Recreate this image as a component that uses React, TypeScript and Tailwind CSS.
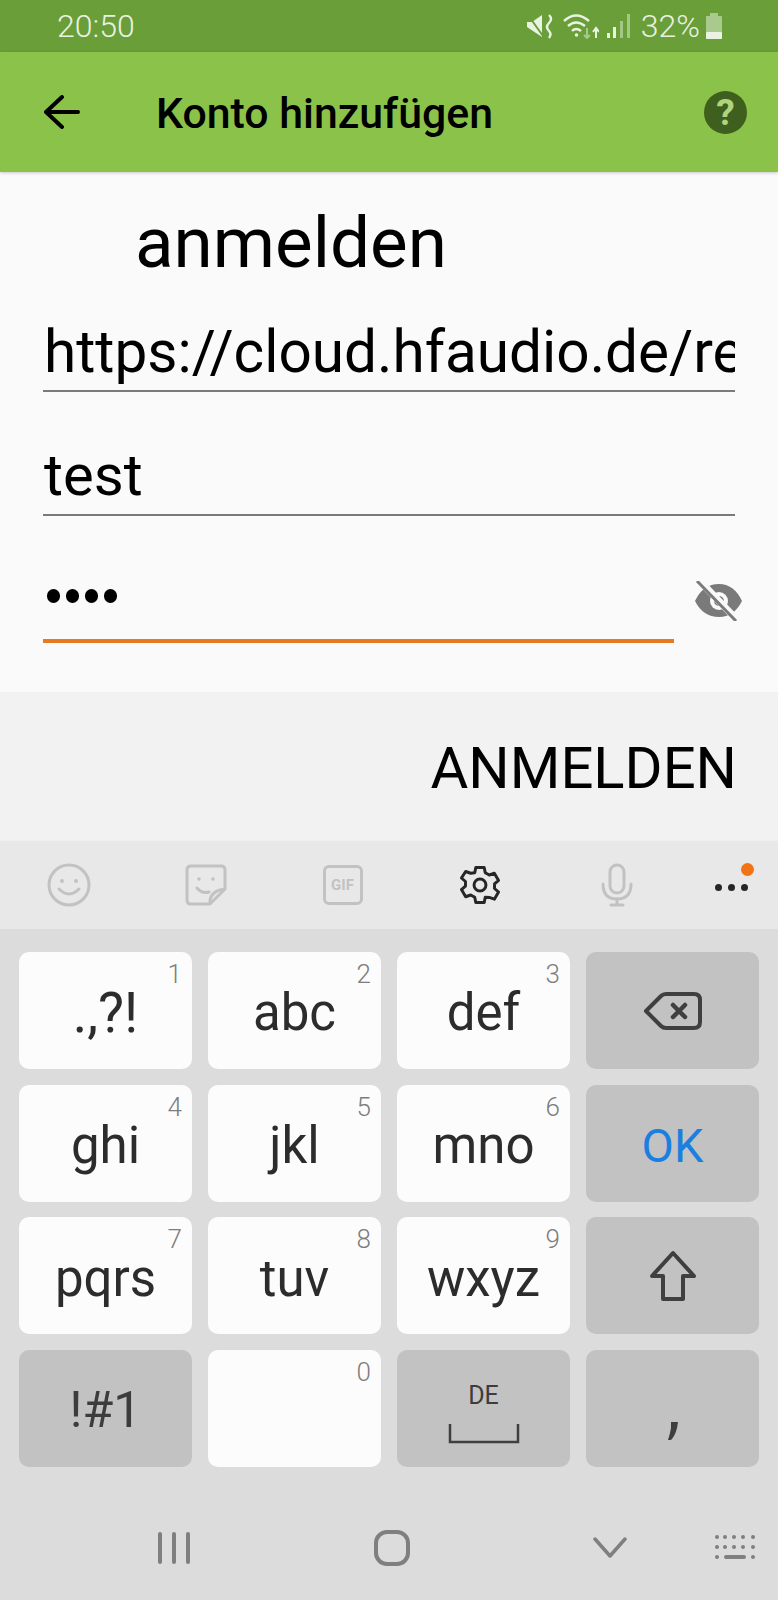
const keys = [
  { label: '.,?!', num: '1' },
  { label: 'abc', num: '2' },
  { label: 'def', num: '3' },
  { label: 'back', dark: true },
  { label: 'ghi', num: '4' },
  { label: 'jkl', num: '5' },
  { label: 'mno', num: '6' },
  { label: 'OK', dark: true },
  { label: 'pqrs', num: '7' },
  { label: 'tuv', num: '8' },
  { label: 'wxyz', num: '9' },
  { label: 'shift', dark: true },
  { label: '!#1', dark: true },
  { label: '', num: '0' },
  { label: 'space', dark: true },
  { label: 'comma', dark: true },
];

function KeyContent({ label }: { label: string }) {
  if (label === 'back') {
    return (
      <svg width="60" height="40" viewBox="0 0 60 40" fill="none" stroke="#3f3f3f" strokeWidth="4" strokeLinejoin="round" strokeLinecap="round">
        <path d="M3 20 L18 5 Q20 3 23 3 H51 Q57 3 57 9 V31 Q57 37 51 37 H23 Q20 37 18 35 Z" />
        <path d="M30 14 L42 26 M42 14 L30 26" strokeWidth="4.5" />
      </svg>
    );
  }
  if (label === 'OK') {
    return <span className="text-[47px] mt-[6px] text-[#1a7fe0]">OK</span>;
  }
  if (label === 'shift') {
    return (
      <svg width="48" height="52" viewBox="0 0 48 52" fill="none" stroke="#3f3f3f" strokeWidth="4" strokeLinejoin="round">
        <path d="M24 3 L45 26 H34 V49 H14 V26 H3 Z" />
      </svg>
    );
  }
  if (label === 'space') {
    return (
      <div className="flex flex-col items-center gap-[13px] mt-[9px]">
        <span className="text-[25px] leading-[26px] text-[#3c3c3c]">DE</span>
        <svg width="72" height="22" viewBox="0 0 72 22" fill="none" stroke="#3f3f3f" strokeWidth="2.5">
          <path d="M2 2 V20 H70 V2" />
        </svg>
      </div>
    );
  }
  if (label === 'comma') {
    return (
      <svg width="11" height="18" viewBox="0 0 11 18" className="mt-[44px]" fill="#3f3f3f">
        <path d="M4 0 H11 L10 6 Q8 14 4 18 H1 Q3 12 4 6 Z" />
      </svg>
    );
  }
  if (label === '!#1') {
    return <span className="text-[50px] mt-[4px] text-[#3c3c3c]">!#1</span>;
  }
  if (label === '.,?!') {
    return <span className="text-[55px] mt-[6px] text-[#2c2c2c]">.,?!</span>;
  }
  return <span className="text-[51px] mt-[6px] text-[#2c2c2c]">{label}</span>;
}

export default function App() {
  return (
    <div className="w-[778px] h-[1600px] flex flex-col bg-[#dcdcdc] font-['Roboto',sans-serif] overflow-hidden">
      {/* status bar */}
      <div className="h-[52px] shrink-0 bg-[#699e39] flex items-center pl-[57px] pr-[55px] text-[#e9f1e0]">
        <span className="text-[32px] font-light">20:50</span>
        <div className="ml-auto flex items-center">
          <svg width="27" height="26" viewBox="0 0 27 26" fill="#eaf2e2">
            <path d="M1 9 H6 L16 2 V24 L10 20 L1 14 Z" />
            <path d="M2 2 L17 23" stroke="#699e39" strokeWidth="2" />
            <path d="M23 2 Q27 6 23 10 Q19 14 23 18 Q26 21 23 25" stroke="#eaf2e2" strokeWidth="2.4" fill="none" />
          </svg>
          <svg width="36" height="26" viewBox="0 0 36 26" fill="none" stroke="#eaf2e2" strokeWidth="2.4" className="ml-[10px]">
            <path d="M1 8 Q13 -3 26 8" />
            <path d="M5 13 Q13 6 22 13" />
            <path d="M9 18 Q13 14 18 18" />
            <circle cx="13.5" cy="22" r="1.8" fill="#eaf2e2" stroke="none" />
            <path d="M24 15 V25 M21 22 L24 25 L27 22" stroke="#a8c98c" strokeWidth="2" />
            <path d="M33 25 V16 M30 19 L33 15 L36 19" strokeWidth="2" />
          </svg>
          <svg width="23" height="26" viewBox="0 0 23 26" className="ml-[8px]">
            <rect x="0" y="20" width="3" height="5" fill="#eaf2e2" />
            <rect x="6" y="14" width="3" height="11" fill="#eaf2e2" />
            <rect x="13" y="8" width="3" height="17" fill="#a5c785" />
            <rect x="20" y="1" width="3" height="24" fill="#a5c785" />
          </svg>
          <span className="text-[32px] font-light ml-[11px] leading-none">32%</span>
          <svg width="18" height="28" viewBox="0 0 18 28" className="ml-[5px]">
            <rect x="5" y="1" width="8" height="4" fill="#a9ca8c" />
            <rect x="1" y="4" width="16" height="23" rx="1" fill="#a9ca8c" />
            <rect x="1" y="20" width="16" height="7" rx="1" fill="#eaf2e2" />
          </svg>
        </div>
      </div>

      {/* app bar */}
      <div className="h-[120px] shrink-0 bg-[#8bc34a] flex items-center pl-[44px] pr-[31px] shadow-[0_1px_3px_rgba(0,0,0,0.2)] z-10">
        <svg width="36" height="34" viewBox="0 0 36 34" fill="none" stroke="#000" strokeWidth="4" strokeLinecap="round" strokeLinejoin="round">
          <path d="M2 17 H34 M18 2 L2 17 L18 32" />
        </svg>
        <span className="ml-[76px] mt-[3px] text-[42.8px] font-medium text-black">Konto hinzufügen</span>
        <div className="ml-auto w-[43px] h-[43px] rounded-full bg-[#3f5f1f] flex items-center justify-center">
          <span className="text-[37px] font-bold text-[#b0d37f] leading-none">?</span>
        </div>
      </div>

      {/* form */}
      <div className="h-[520px] shrink-0 bg-[#fafafa] flex flex-col pl-[43px] pr-[43px] text-black">
        <div className="ml-[92px] mt-[31px] text-[71px] leading-[80px]">anmelden</div>
        <div className="mt-[9px] h-[100px] border-b-2 border-[#7a7a7a] overflow-hidden">
          <div className="text-[58.5px] leading-[120px] whitespace-nowrap pl-[1px]">https://cloud.hfaudio.de/re</div>
        </div>
        <div className="mt-[24px] h-[100px] border-b-2 border-[#7a7a7a]">
          <div className="text-[58px] leading-[118px] pl-[1px]">test</div>
        </div>
        <div className="flex items-center mt-[22px]">
          <div className="w-[631px] shrink-0 h-[105px] border-b-4 border-[#e67a22] flex items-start gap-[6px] pl-[4px] pt-[51px]">
            <span className="w-[13px] h-[14px] rounded-full bg-black" />
            <span className="w-[13px] h-[14px] rounded-full bg-black" />
            <span className="w-[13px] h-[14px] rounded-full bg-black" />
            <span className="w-[13px] h-[14px] rounded-full bg-black" />
          </div>
          <svg width="47" height="40" viewBox="0 0 47 40" className="ml-[21px] mt-[20px] shrink-0">
            <path d="M0 20 Q8 3 24 3 Q39 3 47 20 Q39 36 24 36 Q8 36 0 20 Z" fill="#7a7a7a" />
            <circle cx="24" cy="20" r="9" fill="#fafafa" />
            <circle cx="24" cy="20" r="5" fill="#7a7a7a" />
            <path d="M4 -1 L44 41" stroke="#fafafa" strokeWidth="7" />
            <path d="M2 0 L41 40" stroke="#7a7a7a" strokeWidth="3" />
          </svg>
        </div>
      </div>

      {/* submit bar */}
      <div className="h-[148px] shrink-0 bg-[#f2f2f2] flex items-center justify-end pr-[41px] pt-[4px]">
        <span className="text-[58px] text-black">ANMELDEN</span>
      </div>

      {/* keyboard toolbar */}
      <div className="h-[89px] shrink-0 bg-[#e8e8e8] border-t border-[#eeeeee] relative grid grid-cols-[137px_137px_137px_137px_137px_93px] items-center justify-items-center">
        <svg width="44" height="44" viewBox="0 0 44 44" fill="none" stroke="#c2c2c2" strokeWidth="3">
          <circle cx="22" cy="22" r="20" />
          <circle cx="15" cy="18" r="2" fill="#c2c2c2" stroke="none" />
          <circle cx="29" cy="18" r="2" fill="#c2c2c2" stroke="none" />
          <path d="M12 26 Q22 36 32 26" strokeLinecap="round" />
        </svg>
        <svg width="42" height="42" viewBox="0 0 42 42" fill="none" stroke="#c2c2c2" strokeWidth="3" strokeLinejoin="round">
          <path d="M25 40 H6 Q2 40 2 36 V6 Q2 2 6 2 H36 Q40 2 40 6 V25 Z" />
          <path d="M25 40 Q24 27 40 25" />
          <circle cx="14" cy="15" r="1.8" fill="#c2c2c2" stroke="none" />
          <circle cx="28" cy="15" r="1.8" fill="#c2c2c2" stroke="none" />
          <path d="M12 24 Q17 30 24 28" strokeLinecap="round" />
        </svg>
        <div className="w-[40px] h-[40px] rounded-[6px] border-[3px] border-[#c2c2c2] flex items-center justify-center">
          <span className="text-[15px] font-bold text-[#c2c2c2]">GIF</span>
        </div>
        <svg width="42" height="42" viewBox="0 0 24 24" fill="none" stroke="#262626" strokeWidth="1.7" strokeLinejoin="round">
          <path d="M9.6 2h4.8l.6 3 2.3 1.3 2.9-1 2.4 4.1-2.3 2v2.6l2.3 2-2.4 4.1-2.9-1L15 19l-.6 3H9.6L9 19l-2.3-1.3-2.9 1-2.4-4.1 2.3-2V10L1.4 8l2.4-3.7 2.9 1L9 5z" />
          <circle cx="12" cy="12" r="3.4" />
        </svg>
        <svg width="32" height="44" viewBox="0 0 32 44" fill="none" stroke="#c2c2c2" strokeWidth="3" strokeLinecap="round">
          <rect x="9" y="2" width="14" height="28" rx="7" />
          <path d="M2 21 Q2 36 16 36 Q30 36 30 21" />
          <path d="M16 36 V42 M10 42 H22" />
        </svg>
        <div className="flex gap-[6px] mt-[4px]">
          <span className="w-[7px] h-[7px] rounded-full bg-[#262626]" />
          <span className="w-[7px] h-[7px] rounded-full bg-[#262626]" />
          <span className="w-[7px] h-[7px] rounded-full bg-[#262626]" />
        </div>
        <span className="absolute right-[24px] top-[22px] w-[13px] h-[13px] rounded-full bg-[#f07318]" />
      </div>

      {/* keys */}
      <div className="grid grid-cols-[173px_173px_173px_173px] gap-x-[16px] gap-y-[15.7px] pl-[19px] pt-[23px]">
        {keys.map((k) => (
          <div
            key={k.label + (k.num ?? '')}
            className={
              k.dark
                ? 'relative h-[117px] rounded-[10px] bg-[#c2c2c2] flex items-center justify-center text-[#3c3c3c]'
                : 'relative h-[117px] rounded-[10px] bg-[#fcfcfc] flex items-center justify-center'
            }
          >
            <KeyContent label={k.label} />
            {k.num && (
              <span className="absolute right-[10px] top-[3px] text-[26px] font-light text-[#7d7d7d]">{k.num}</span>
            )}
          </div>
        ))}
      </div>

      {/* nav bar */}
      <div className="flex-1 flex items-center pl-[157px] pt-[28px]">
        <svg width="34" height="34" viewBox="0 0 34 34" fill="#7f7f7f">
          <rect x="1" y="1" width="4" height="32" rx="2" />
          <rect x="15" y="1" width="4" height="32" rx="2" />
          <rect x="29" y="1" width="4" height="32" rx="2" />
        </svg>
        <svg width="36" height="36" viewBox="0 0 36 36" className="ml-[183px]" fill="none" stroke="#7f7f7f" strokeWidth="4">
          <rect x="2" y="2" width="32" height="32" rx="11" />
        </svg>
        <svg width="34" height="22" viewBox="0 0 34 22" className="ml-[183px]" fill="none" stroke="#7f7f7f" strokeWidth="3.5" strokeLinecap="round" strokeLinejoin="round">
          <path d="M2 2 L17 19 L32 2" />
        </svg>
        <svg width="40" height="26" viewBox="0 0 40 26" className="ml-[88px]" fill="#7f7f7f">
          <circle cx="2" cy="2" r="2" /><circle cx="10" cy="2" r="2" /><circle cx="19" cy="2" r="2" /><circle cx="28" cy="2" r="2" /><circle cx="38" cy="2" r="2" />
          <circle cx="2" cy="12" r="2" /><circle cx="10" cy="12" r="2" /><circle cx="19" cy="12" r="2" /><circle cx="28" cy="12" r="2" /><circle cx="38" cy="12" r="2" />
          <circle cx="2" cy="22" r="2" /><circle cx="38" cy="22" r="2" />
          <rect x="9" y="20" width="22" height="4" rx="2" />
        </svg>
      </div>
    </div>
  );
}
